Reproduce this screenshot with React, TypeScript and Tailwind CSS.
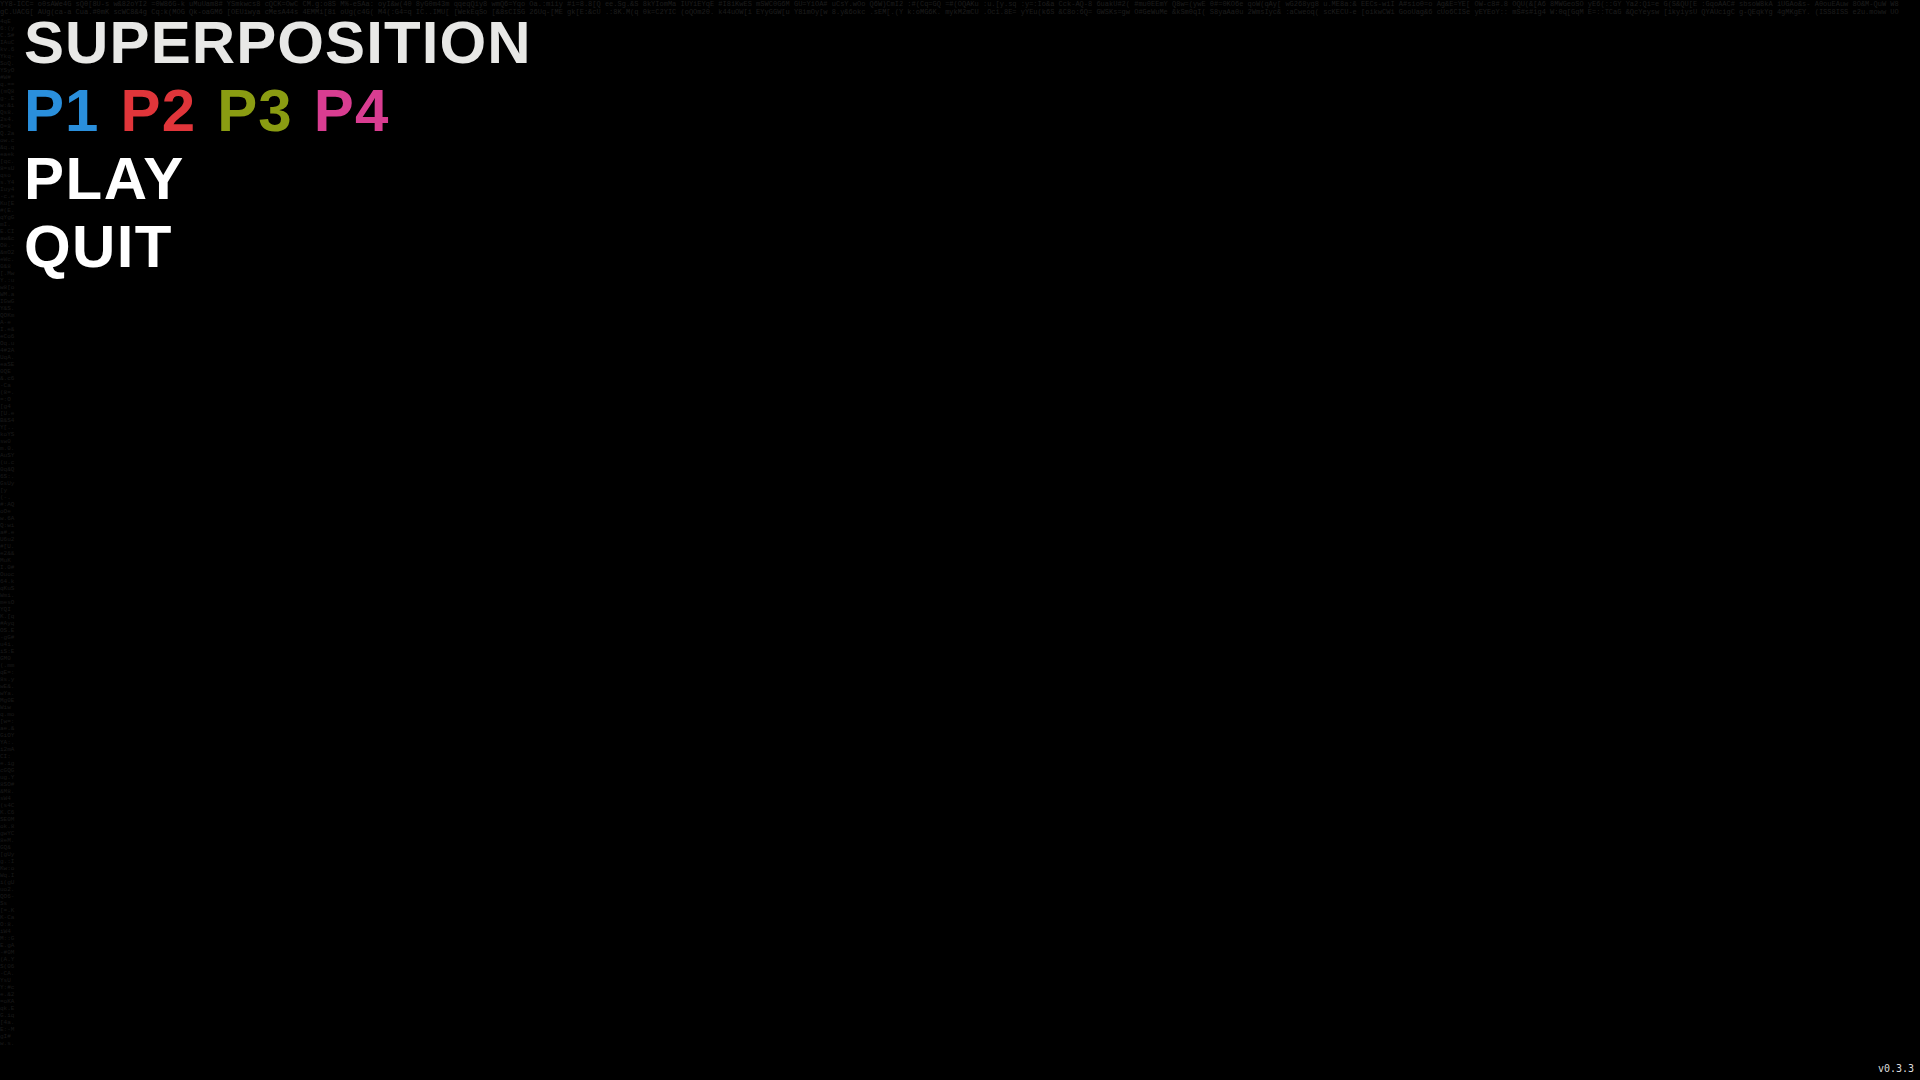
import React from 'react';

// deterministic filler for the faint debug text along the top and left edges
const noise = (seed: number, len: number) => {
  const chars = 'abcdefghijklmnopqrstuvwxyz0123456789ABCDEFGHIJKLMNOPQRSTUVWXYZ.,:;-_=+#%&/()[]';
  let s = seed;
  let out = '';
  for (let i = 0; i < len; i++) {
    s = (s * 1103515245 + 12345) % 2147483648;
    out += i % 9 === 8 ? ' ' : chars[s % chars.length];
  }
  return out;
};

const topLines = [noise(7, 452), noise(19, 452)];
const sideText = noise(31, 560).replace(/ /g, '.');

const players = [
  { label: 'P1', color: 'text-[#2a8fdc]' },
  { label: 'P2', color: 'text-[#e0353a]' },
  { label: 'P3', color: 'text-[#8a9c12]' },
  { label: 'P4', color: 'text-[#d93d91]' },
];

const App: React.FC = () => {
  return (
    <div className="relative w-full h-screen bg-black overflow-hidden">
      {/* faint background text */}
      <div className="absolute top-0 left-0 right-0 text-[7px] leading-[8px] text-[#1e1e1e] font-['Liberation_Mono',monospace] whitespace-nowrap select-none">
        {topLines.map((l, i) => (
          <div key={i}>{l}</div>
        ))}
      </div>
      <div className="absolute top-[18px] left-0 w-[15px] text-[6px] leading-[7px] text-[#1a1a1a] font-['Liberation_Mono',monospace] break-all select-none">
        {sideText}
      </div>

      {/* menu */}
      <div className="relative pt-[9px] pl-[24px] font-['Liberation_Sans',Arial,sans-serif] font-bold text-[60px] leading-[68px] tracking-[1.1px]">
        <div className="text-[#e8e8e6]">SUPERPOSITION</div>
        <div className="flex gap-[21px]">
          {players.map((p) => (
            <span key={p.label} className={p.color}>{p.label}</span>
          ))}
        </div>
        <div className="text-white tracking-[1.6px]">PLAY</div>
        <div className="text-white tracking-[1.4px]">QUIT</div>
      </div>

      <div className="absolute right-[6px] bottom-[5px] text-[10px] leading-[12px] text-[#dddddd] font-['DejaVu_Sans_Mono',monospace]">
        v0.3.3
      </div>
    </div>
  );
};

export default App;
